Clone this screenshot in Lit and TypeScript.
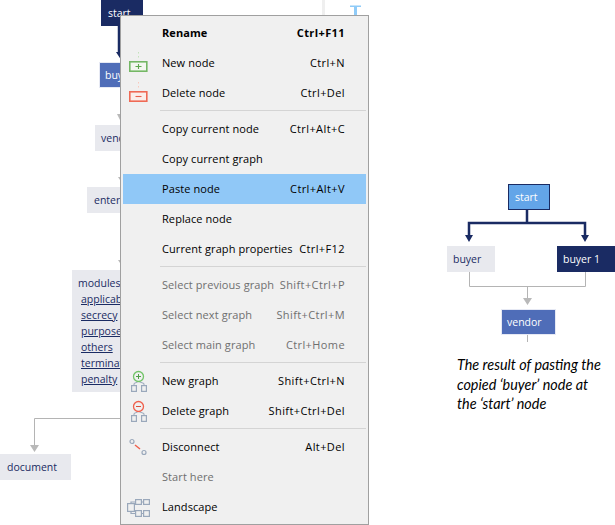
import { LitElement, html, css, svg } from "lit";
import { customElement } from "lit/decorators.js";

type Item = { label?: string; key?: string; bold?: boolean; off?: boolean; active?: boolean; icon?: string; sep?: boolean };

const items: Item[] = [
  { label: "Rename", key: "Ctrl+F11", bold: true },
  { label: "New node", key: "Ctrl+N", icon: "new" },
  { label: "Delete node", key: "Ctrl+Del", icon: "del" },
  { sep: true },
  { label: "Copy current node", key: "Ctrl+Alt+C" },
  { label: "Copy current graph" },
  { label: "Paste node", key: "Ctrl+Alt+V", active: true },
  { label: "Replace node" },
  { label: "Current graph properties", key: "Ctrl+F12" },
  { sep: true },
  { label: "Select previous graph", key: "Shift+Ctrl+P", off: true },
  { label: "Select next graph", key: "Shift+Ctrl+M", off: true },
  { label: "Select main graph", key: "Ctrl+Home", off: true },
  { sep: true },
  { label: "New graph", key: "Shift+Ctrl+N", icon: "newg" },
  { label: "Delete graph", key: "Shift+Ctrl+Del", icon: "delg" },
  { sep: true },
  { label: "Disconnect", key: "Alt+Del", icon: "disc" },
  { label: "Start here", off: true },
  { label: "Landscape", icon: "land" },
];

const tree = svg`<g fill="none" stroke="#9aa8bb" stroke-width="1.200"><rect x="3.600" y="16.600" width="4.800" height="5.800"/><rect x="13.600" y="16.600" width="4.800" height="5.800"/><path d="M6 16.500V14.500L10.500 12.500L16 14.500V16.500" stroke-width="1"/></g>`;

const icons: Record<string, unknown> = {
  new: svg`<path d="M10.500 1v1.500M10.500 5v1.500" stroke="#c3e3bb" stroke-width="1"/><rect x="1.800" y="10.800" width="17" height="9.400" fill="#f3f7ef" stroke="#74b765" stroke-width="1.600"/><path d="M7.500 15.500h6M10.500 13v5" stroke="#5ea84e" stroke-width="1.100"/>`,
  del: svg`<path d="M10.500 1v1.500M10.500 5v1.500" stroke="#f9c8bc" stroke-width="1"/><rect x="1.800" y="10.800" width="17" height="9.400" fill="#fbeeea" stroke="#ef6a55" stroke-width="1.600"/><path d="M7.500 15.500h6" stroke="#e9604b" stroke-width="1.100"/>`,
  newg: svg`${tree}<circle cx="10.500" cy="7.500" r="5" fill="#f0f0f0" stroke="#72c468" stroke-width="1.300"/><path d="M8 7.500h5M10.500 5v5" stroke="#4f9f47" stroke-width="1"/>`,
  delg: svg`${tree}<circle cx="10.500" cy="7.500" r="5" fill="#f0f0f0" stroke="#f0604c" stroke-width="1.300"/><path d="M8 7.500h5" stroke="#d94f3c" stroke-width="1"/>`,
  disc: svg`<circle cx="4" cy="6.500" r="2" fill="none" stroke="#9aa8bb" stroke-width="1.200"/><circle cx="16" cy="17.500" r="2" fill="none" stroke="#9aa8bb" stroke-width="1.200"/><path d="M7 10l5 4" stroke="#ef5f4b" stroke-width="1.500"/>`,
  land: svg`<g fill="none" stroke="#9aa8bb" stroke-width="1.200"><rect x="-0.400" y="8.600" width="6.800" height="7.800"/><rect x="7.600" y="4.600" width="5.800" height="4.800"/><rect x="15.600" y="4.600" width="5.800" height="4.800"/><rect x="7.600" y="15.600" width="5.800" height="5.800"/><rect x="15.600" y="15.600" width="5.800" height="5.800"/><path d="M3 8.500V7H7.500M3 16.500V18.500H7.500M13.500 7H15.500M13.500 18.500H15.500"/></g>`,
};

@customElement("app-root")
export class AppRoot extends LitElement {
  static styles = css`
    :host { display: block; width: 615px; height: 525px; position: relative; overflow: hidden; background: #fff;
      font-family: "Open Sans", "Noto Sans", sans-serif; }
    .wires { position: absolute; left: 0; top: 0; }
    .node { position: absolute; box-sizing: border-box; height: 26px; display: flex; align-items: center;
      font-size: 10.500px; white-space: nowrap; }
    .navy { background: #1a2b63; color: #fff; }
    .mid { background: #4f6db8; color: #fff; border: 1px solid #e6e9f4; }
    .sky { background: #63a5e8; color: #fff; border: 1px solid #1a2b63; }
    .grey { background: #e8e9ee; color: #1a2b63; }
    .start-l { left: 101px; top: 0; width: 42px; padding-left: 7px; }
    .buyer-l { left: 99px; top: 62px; width: 60px; padding-left: 5px; }
    .vendor-l { left: 95px; top: 125px; width: 60px; padding-left: 6px; }
    .enter-l { left: 87px; top: 187px; width: 70px; padding-left: 7px; }
    .doc-l { left: 0; top: 454px; width: 71px; padding-left: 7px; }
    .start-r { left: 508px; top: 184px; width: 42px; padding-left: 6px; }
    .buyer-r { left: 447px; top: 246px; width: 48px; padding-left: 6px; }
    .buyer1-r { left: 557px; top: 246px; width: 58px; padding-left: 6px; }
    .vendor-r { left: 501px; top: 309px; width: 55px; padding-left: 5px; }
    .modules { position: absolute; left: 72px; top: 270px; width: 70px; height: 122px; box-sizing: border-box;
      padding: 5px 0 0 6px; background: #e8e9ee; color: #1a2b63; font-size: 10.500px; line-height: 16px; }
    .modules a { display: block; margin-left: 3px; color: #1a2b63; text-decoration: underline; }
    .caption { position: absolute; left: 457px; top: 355px; width: 150px; margin: 0; color: #000;
      font-family: Lato, "Open Sans", sans-serif; font-size: 14.400px; font-style: italic; line-height: 19.500px; }
    .menu { position: absolute; left: 120px; top: 15px; width: 249px; height: 510px; box-sizing: border-box;
      background: #f0f0f0; border: 1px solid #a0a0a0; padding: 2px; font-size: 11px; color: #000; }
    .row { display: grid; grid-template-columns: 39px 1fr auto; align-items: center; height: 30px; padding-right: 21px; white-space: nowrap; }
    .row.bold { font-weight: 700; }
    .row.off { color: #6f6f6f; }
    .row.active { background: #90c8f7; }
    .icon { display: flex; padding-left: 5px; }
    .icon svg { overflow: visible; }
    .label { margin-bottom: 2px; letter-spacing: 0.080px; }
    .key { margin-bottom: 2px; letter-spacing: 0.400px; }
    .sepbox { height: 6px; box-sizing: border-box; padding-top: 2px; }
    .sepbox .line { height: 1px; margin-left: 37px; background: #d4d4d4; }
  `;

  private renderRow(i: Item) {
    if (i.sep) return html`<div class="sepbox"><div class="line"></div></div>`;
    const cls = ["row", i.bold ? "bold" : "", i.off ? "off" : "", i.active ? "active" : ""].join(" ");
    return html`<div class=${cls}>
      <span class="icon">${i.icon
        ? html`<svg width="24" height="24" viewBox="0 0 24 24">${icons[i.icon]}</svg>`
        : ""}</span>
      <span class="label">${i.label}</span><span class="key">${i.key ?? ""}</span>
    </div>`;
  }

  render() {
    return html`
      <svg class="wires" width="615" height="525">
        <rect x="322" y="0" width="3" height="15" fill="#efefef"/>
        <path d="M350 5.500h11v1.500h-11zM354 7h3v8h-3z" fill="#8fcbf8"/>
        <g fill="none" stroke="#1a2b63" stroke-width="2.500">
          <path d="M119 26V53"/>
          <path d="M527 210V223M469 236V223H585V236"/>
        </g>
        <g fill="#1a2b63">
          <path d="M116 52h9l-4.500 7zM465 235h8l-4 7zM581 235h8l-4 7z"/>
        </g>
        <g fill="none" stroke="#b4b4b4" stroke-width="1">
          <path d="M120 418.500H34.500V445"/>
          <path d="M469.500 272V286.500H585.500V272M527.500 286.500V298M527.500 335V342"/>
        </g>
        <g fill="#b9b9b9">
          <path d="M117 114h8l-4 8zM118 177h8l-4 6zM118 260h8l-4 6zM30 445h9l-4.500 7zM523 298h9l-4.500 7z"/>
        </g>
      </svg>

      <div class="node navy start-l">start</div>
      <div class="node mid buyer-l">buyer</div>
      <div class="node grey vendor-l">vendor</div>
      <div class="node grey enter-l">enterprise</div>
      <div class="modules">modules
        <a>applicable</a><a>secrecy</a><a>purpose</a><a>others</a><a>terminate</a><a>penalty</a>
      </div>
      <div class="node grey doc-l">document</div>

      <div class="node sky start-r">start</div>
      <div class="node grey buyer-r">buyer</div>
      <div class="node navy buyer1-r">buyer 1</div>
      <div class="node mid vendor-r">vendor</div>
      <p class="caption">The result of pasting the copied ‘buyer’ node at the ‘start’ node</p>

      <div class="menu">${items.map((i) => this.renderRow(i))}</div>
    `;
  }
}
